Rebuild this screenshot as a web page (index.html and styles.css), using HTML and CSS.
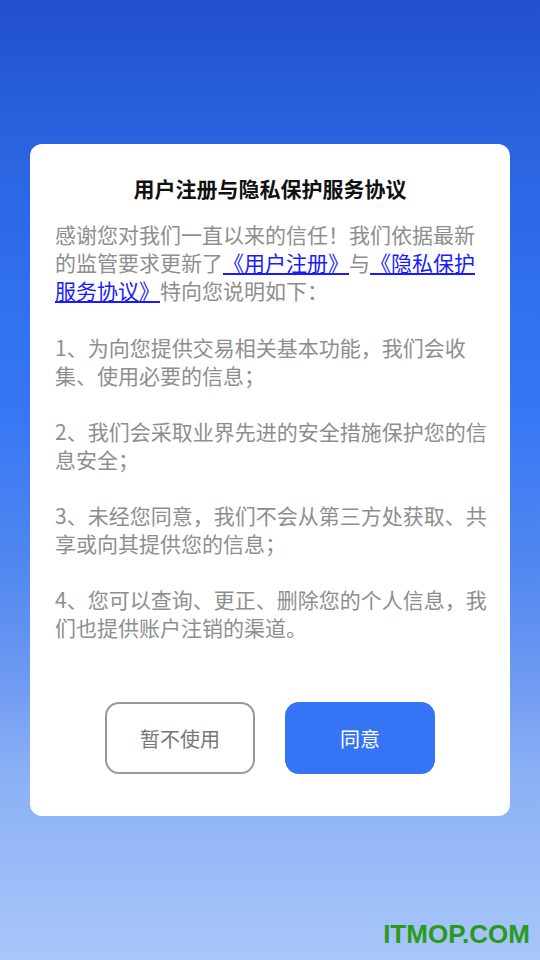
FILE: index.html
```html
<!DOCTYPE html>
<html lang="zh-CN">
<head>
    <meta charset="UTF-8">
    <title>用户注册与隐私保护服务协议</title>
    <link rel="stylesheet" href="styles.css">
</head>
<body>
    <div class="page">
        <div class="dialog">
            <h1>用户注册与隐私保护服务协议</h1>
            <div class="content">
                <p>感谢您对我们一直以来的信任！我们依据最新的监管要求更新了<a href="#">《用户注册》</a>与<a href="#">《隐私保护服务协议》</a>特向您说明如下：</p>
                <p>1、为向您提供交易相关基本功能，我们会收集、使用必要的信息；</p>
                <p>2、我们会采取业界先进的安全措施保护您的信息安全；</p>
                <p>3、未经您同意，我们不会从第三方处获取、共享或向其提供您的信息；</p>
                <p>4、您可以查询、更正、删除您的个人信息，我们也提供账户注销的渠道。</p>
            </div>
            <div class="actions">
                <button class="btn btn-cancel">暂不使用</button>
                <button class="btn btn-agree">同意</button>
            </div>
        </div>
        <div class="watermark">ITMOP.COM</div>
    </div>
</body>
</html>
```

FILE: styles.css
```css
html, body {
    margin: 0;
    padding: 0;
}
body {
    font-family: "Noto Sans CJK SC", "Noto Sans", sans-serif;
}
.page {
    position: relative;
    width: 540px;
    height: 960px;
    box-sizing: border-box;
    padding-top: 144px;
    background: linear-gradient(180deg, #2150cc 0%, #2a63e0 15%, #3273f2 35%, #3676f5 42%, #4f86f0 58%, #6c98f2 70%, #8aaff5 80%, #a8c6fa 100%);
}
.dialog {
    margin: 0 30px;
    background-color: #fff;
    border-radius: 12px;
    padding: 30px 21px 42px 25px;
}
h1 {
    margin: 0;
    text-align: center;
    font-size: 21px;
    line-height: 28px;
    font-weight: bold;
    color: #111;
    padding-right: 4px;
}
.content {
    margin-top: 18px;
}
.content p {
    margin: 0 0 28px;
    font-size: 21px;
    line-height: 28px;
    color: #8e8e8e;
}
.content p:first-child {
    margin-bottom: 29px;
}
.content p:last-child {
    margin-bottom: 0;
}
.content a {
    color: #1a1aff;
    text-decoration: underline;
}
.actions {
    display: flex;
    justify-content: center;
    gap: 30px;
    margin-top: 61px;
    padding-right: 4px;
}
.btn {
    width: 150px;
    height: 72px;
    border-radius: 14px;
    font-family: "Noto Sans CJK SC", sans-serif;
    font-size: 20px;
    cursor: pointer;
}
.btn-cancel {
    background-color: #fff;
    border: 2px solid #999;
    color: #777;
}
.btn-agree {
    background-color: #3574f5;
    border: none;
    color: #fff;
}
.watermark {
    position: absolute;
    right: 10px;
    bottom: 10px;
    font-family: "Liberation Sans", Arial, sans-serif;
    font-weight: bold;
    font-size: 26px;
    color: #2a9a1a;
}
```
